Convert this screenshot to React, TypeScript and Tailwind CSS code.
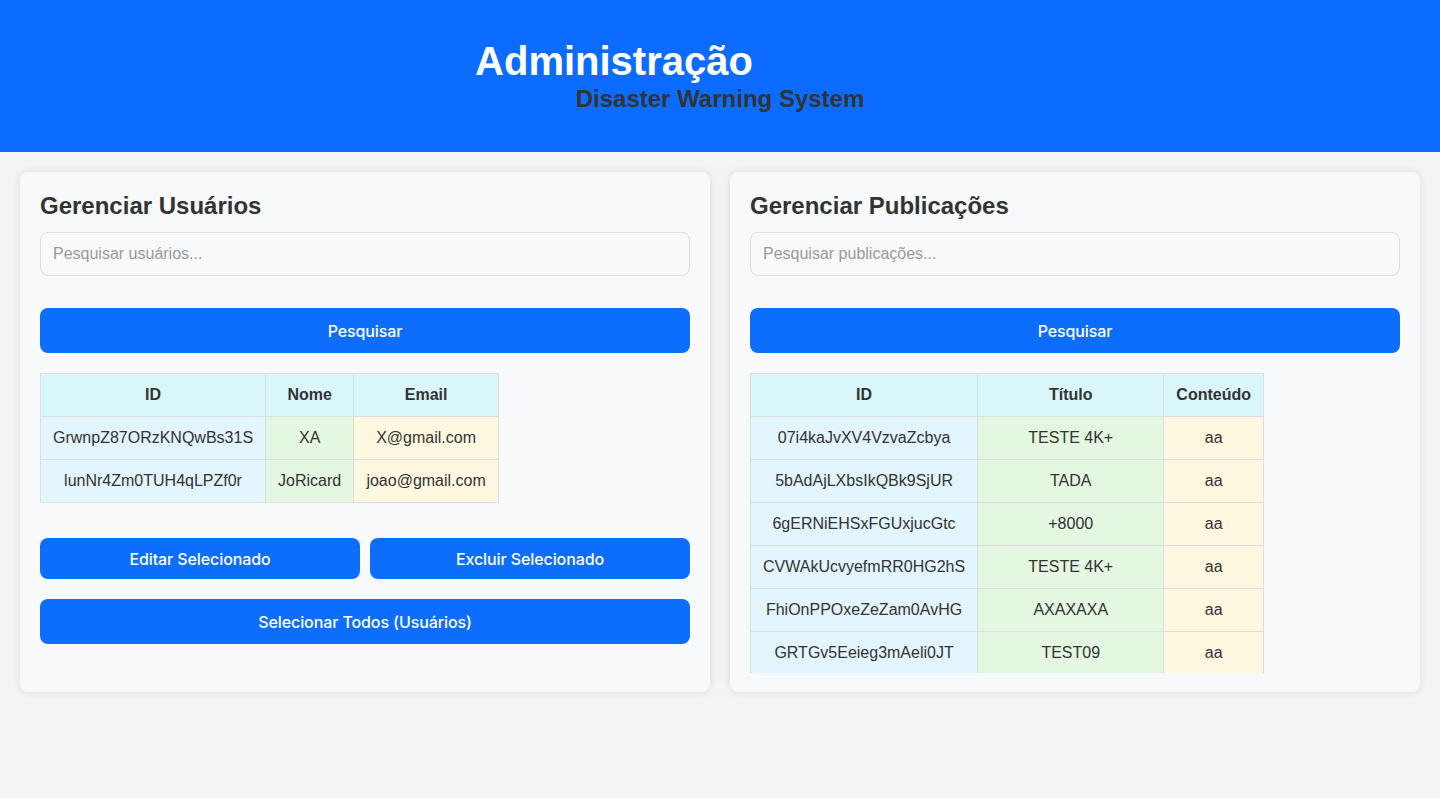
const USERS = [
  { id: 'GrwnpZ87ORzKNQwBs31S', nome: 'XA', email: 'X@gmail.com' },
  { id: 'lunNr4Zm0TUH4qLPZf0r', nome: 'JoRicard', email: 'joao@gmail.com' },
];

const POSTS = [
  { id: '07i4kaJvXV4VzvaZcbya', titulo: 'TESTE 4K+', conteudo: 'aa' },
  { id: '5bAdAjLXbsIkQBk9SjUR', titulo: 'TADA', conteudo: 'aa' },
  { id: '6gERNiEHSxFGUxjucGtc', titulo: '+8000', conteudo: 'aa' },
  { id: 'CVWAkUcvyefmRR0HG2hS', titulo: 'TESTE 4K+', conteudo: 'aa' },
  { id: 'FhiOnPPOxeZeZam0AvHG', titulo: 'AXAXAXA', conteudo: 'aa' },
  { id: 'GRTGv5Eeieg3mAeli0JT', titulo: 'TEST09', conteudo: 'aa' },
];

const th = 'border border-[#ddd] bg-[#d9f6fb] h-[43px] px-3 font-bold text-center';
const tdId = 'border border-[#ddd] bg-[#e3f5fe] h-[43px] px-3 text-center';
const tdGreen = 'border border-[#ddd] bg-[#e3f7e1] h-[43px] px-3 text-center';
const tdYellow = 'border border-[#ddd] bg-[#fff8e1] h-[43px] px-3 text-center';

function Button({ children, className = '' }: { children: React.ReactNode; className?: string }) {
  return (
    <button className={`rounded-lg bg-[#0d6efd] font-['Inter',sans-serif] text-[16px] font-medium tracking-[-0.1px] text-white ${className}`}>
      {children}
    </button>
  );
}

function SearchBlock({ title, placeholder }: { title: string; placeholder: string }) {
  return (
    <>
      <h2 className="text-[24px] font-bold leading-[28px] text-[#333]">{title}</h2>
      <input
        placeholder={placeholder}
        className="mt-[12px] h-[44px] w-full rounded-lg border border-[#ddd] bg-[#f8f9fa] px-3 text-[16px] text-[#333] placeholder:text-[#9a9a9a] outline-none"
      />
      <Button className="mt-[32px] h-[45px] w-full">Pesquisar</Button>
    </>
  );
}

export default function App() {
  return (
    <div className="min-h-[798px] bg-[#f4f4f4] text-[#333]" style={{ fontFamily: '"Liberation Sans", Arial, sans-serif' }}>
      <header className="flex h-[152px] flex-col items-center bg-[#0b6cff] pt-[38px]">
        <h1 className="mr-[212px] text-[40px] font-bold leading-[46px] text-white">Administração</h1>
        <p className="mt-[1px] text-[24px] font-bold leading-[28px] text-[#333]">Disaster Warning System</p>
      </header>

      <main className="flex gap-5 p-5">
        <section className="flex h-[520px] flex-1 flex-col rounded-lg bg-[#f8f9fa] p-5 shadow-[0_0_10px_rgba(0,0,0,0.1)]">
          <SearchBlock title="Gerenciar Usuários" placeholder="Pesquisar usuários..." />
          <table className="mt-5 w-[459px] border-collapse text-[16px]">
            <thead>
              <tr>
                <th className={`${th} w-[225px]`}>ID</th>
                <th className={`${th} w-[88px]`}>Nome</th>
                <th className={th}>Email</th>
              </tr>
            </thead>
            <tbody>
              {USERS.map((u) => (
                <tr key={u.id}>
                  <td className={tdId}>{u.id}</td>
                  <td className={tdGreen}>{u.nome}</td>
                  <td className={tdYellow}>{u.email}</td>
                </tr>
              ))}
            </tbody>
          </table>
          <div className="mt-[35px] flex gap-[10px]">
            <Button className="h-[41px] flex-1">Editar Selecionado</Button>
            <Button className="h-[41px] flex-1">Excluir Selecionado</Button>
          </div>
          <Button className="mt-5 h-[45px] w-full">Selecionar Todos (Usuários)</Button>
        </section>

        <section className="flex h-[520px] flex-1 flex-col overflow-hidden rounded-lg bg-[#f8f9fa] p-5 pb-0 shadow-[0_0_10px_rgba(0,0,0,0.1)]">
          <SearchBlock title="Gerenciar Publicações" placeholder="Pesquisar publicações..." />
          <div className="mb-[19px] mt-5 min-h-0 flex-1 overflow-hidden">
            <table className="w-[514px] border-collapse text-[16px]">
              <thead>
                <tr>
                  <th className={`${th} w-[227px]`}>ID</th>
                  <th className={`${th} w-[187px]`}>Título</th>
                  <th className={th}>Conteúdo</th>
                </tr>
              </thead>
              <tbody>
                {POSTS.map((p) => (
                  <tr key={p.id}>
                    <td className={tdId}>{p.id}</td>
                    <td className={tdGreen}>{p.titulo}</td>
                    <td className={tdYellow}>{p.conteudo}</td>
                  </tr>
                ))}
              </tbody>
            </table>
          </div>
        </section>
      </main>
    </div>
  );
}
